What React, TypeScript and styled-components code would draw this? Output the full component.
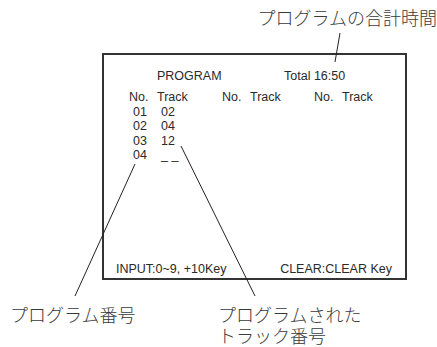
import React from "react";
import styled, { createGlobalStyle } from "styled-components";

const GlobalStyle = createGlobalStyle`
  html, body {
    margin: 0;
    padding: 0;
    background: #fff;
  }
`;

type Entry = { no: string; track: string };

const entries: Entry[] = [
  { no: "01", track: "02" },
  { no: "02", track: "04" },
  { no: "03", track: "12" },
  { no: "04", track: "_ _" },
];

const App: React.FC = () => {
  return (
    <Page>
      <GlobalStyle />
      <TopCaption>プログラムの合計時間</TopCaption>

      <Screen>
        <TitleRow>
          <ScreenText>PROGRAM</ScreenText>
          <ScreenText>Total 16:50</ScreenText>
        </TitleRow>

        <Table>
          {[0, 1, 2].map((col) => (
            <Column key={col}>
              <HeadCell>No.</HeadCell>
              <HeadCell>Track</HeadCell>
              {col === 0 &&
                entries.map((e) => (
                  <React.Fragment key={e.no}>
                    <DataCell>{e.no}</DataCell>
                    <DataCell>{e.track}</DataCell>
                  </React.Fragment>
                ))}
            </Column>
          ))}
        </Table>

        <Footer>
          <ScreenText>INPUT:0~9, +10Key</ScreenText>
          <ScreenText>CLEAR:CLEAR Key</ScreenText>
        </Footer>
      </Screen>

      <BottomLabels>
        <Label>
          <Caption>プログラム番号</Caption>
        </Label>
        <Label>
          <Caption>プログラムされた</Caption>
          <Caption>トラック番号</Caption>
        </Label>
      </BottomLabels>

      <Leaders viewBox="0 0 437 347" width={437} height={347}>
        <line x1={340} y1={33} x2={335} y2={62} />
        <line x1={135} y1={164} x2={75} y2={296} />
        <line x1={181} y1={146} x2={255} y2={296} />
      </Leaders>
    </Page>
  );
};

export default App;

const Page = styled.div`
  position: relative;
  width: 437px;
  height: 347px;
  padding-top: 7px;
  box-sizing: border-box;
  background: #fff;
  overflow: hidden;
`;

const Caption = styled.div`
  font-family: "Noto Sans CJK JP", sans-serif;
  font-size: 18px;
  font-weight: 300;
  line-height: 21px;
  height: 21px;
  color: #3a3a3a;
  white-space: nowrap;
`;

const TopCaption = styled(Caption)`
  line-height: 20px;
  height: 20px;
  text-align: right;
`;

const Screen = styled.div`
  margin: 26px 0 0 102px;
  width: 305px;
  height: 227px;
  box-sizing: border-box;
  border: 2px solid #333;
  padding: 14px 13px 2px 12px;
  display: flex;
  flex-direction: column;
`;

const ScreenText = styled.span`
  font-family: "Liberation Sans", Arial, sans-serif;
  font-size: 12.5px;
  line-height: 14.5px;
  color: #2a2a2a;
  white-space: nowrap;
`;

const TitleRow = styled.div`
  display: grid;
  grid-template-columns: 127px auto;
  padding-left: 41px;
  font-size: 0;
`;

const Table = styled.div`
  display: grid;
  grid-template-columns: 93px 92px 93px;
  margin: 6.5px 0 0 13px;
`;

const Column = styled.div`
  display: grid;
  grid-template-columns: 28px auto;
  align-content: start;
`;

const HeadCell = styled(ScreenText)``;

const DataCell = styled(ScreenText)`
  padding-left: 4px;
`;

const Footer = styled.div`
  margin-top: auto;
  display: flex;
  justify-content: space-between;
`;

const BottomLabels = styled.div`
  display: grid;
  grid-template-columns: 208px auto;
  margin-top: 24px;
  padding-left: 10px;
`;

const Label = styled.div`
  display: flex;
  flex-direction: column;
`;

const Leaders = styled.svg`
  position: absolute;
  left: 0;
  top: 0;
  pointer-events: none;

  line {
    stroke: #222;
    stroke-width: 1;
  }
`;
